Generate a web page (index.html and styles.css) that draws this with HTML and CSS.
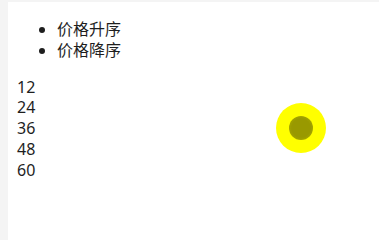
FILE: index.html
```html
<!DOCTYPE html>
<html lang="zh">
<head>
<meta charset="utf-8">
<link rel="stylesheet" href="styles.css">
</head>
<body>
<div class="panel">
  <ul class="sort-menu">
    <li>价格升序</li>
    <li>价格降序</li>
  </ul>
  <div class="values">
    <div>12</div>
    <div>24</div>
    <div>36</div>
    <div>48</div>
    <div>60</div>
  </div>
</div>
<div class="click-dot"><span class="click-core"></span></div>
</body>
</html>
```
FILE: styles.css
```css
html, body {
  margin: 0;
  height: 100%;
}
body {
  background: #f4f4f4;
  padding: 2px 0 0 8px;
  box-sizing: border-box;
  font-family: "Noto Sans", "Noto Sans CJK SC", sans-serif;
  font-size: 16px;
  line-height: 20.8px;
  color: #1e1e1e;
  overflow: hidden;
}
.panel {
  background: #fff;
  height: 100%;
  padding: 1px 0 0 9px;
  box-sizing: border-box;
}
.sort-menu {
  margin: 16px 0;
  padding-left: 40px;
}
.click-dot {
  position: absolute;
  left: 276px;
  top: 103px;
  width: 50px;
  height: 50px;
  border-radius: 50%;
  background: #ffff00;
  display: flex;
  align-items: center;
  justify-content: center;
}
.click-core {
  width: 24px;
  height: 24px;
  border-radius: 50%;
  background: radial-gradient(circle, #999900 0, #999900 55%, #aaaa00 80%, #e6e600 100%);
}
```
